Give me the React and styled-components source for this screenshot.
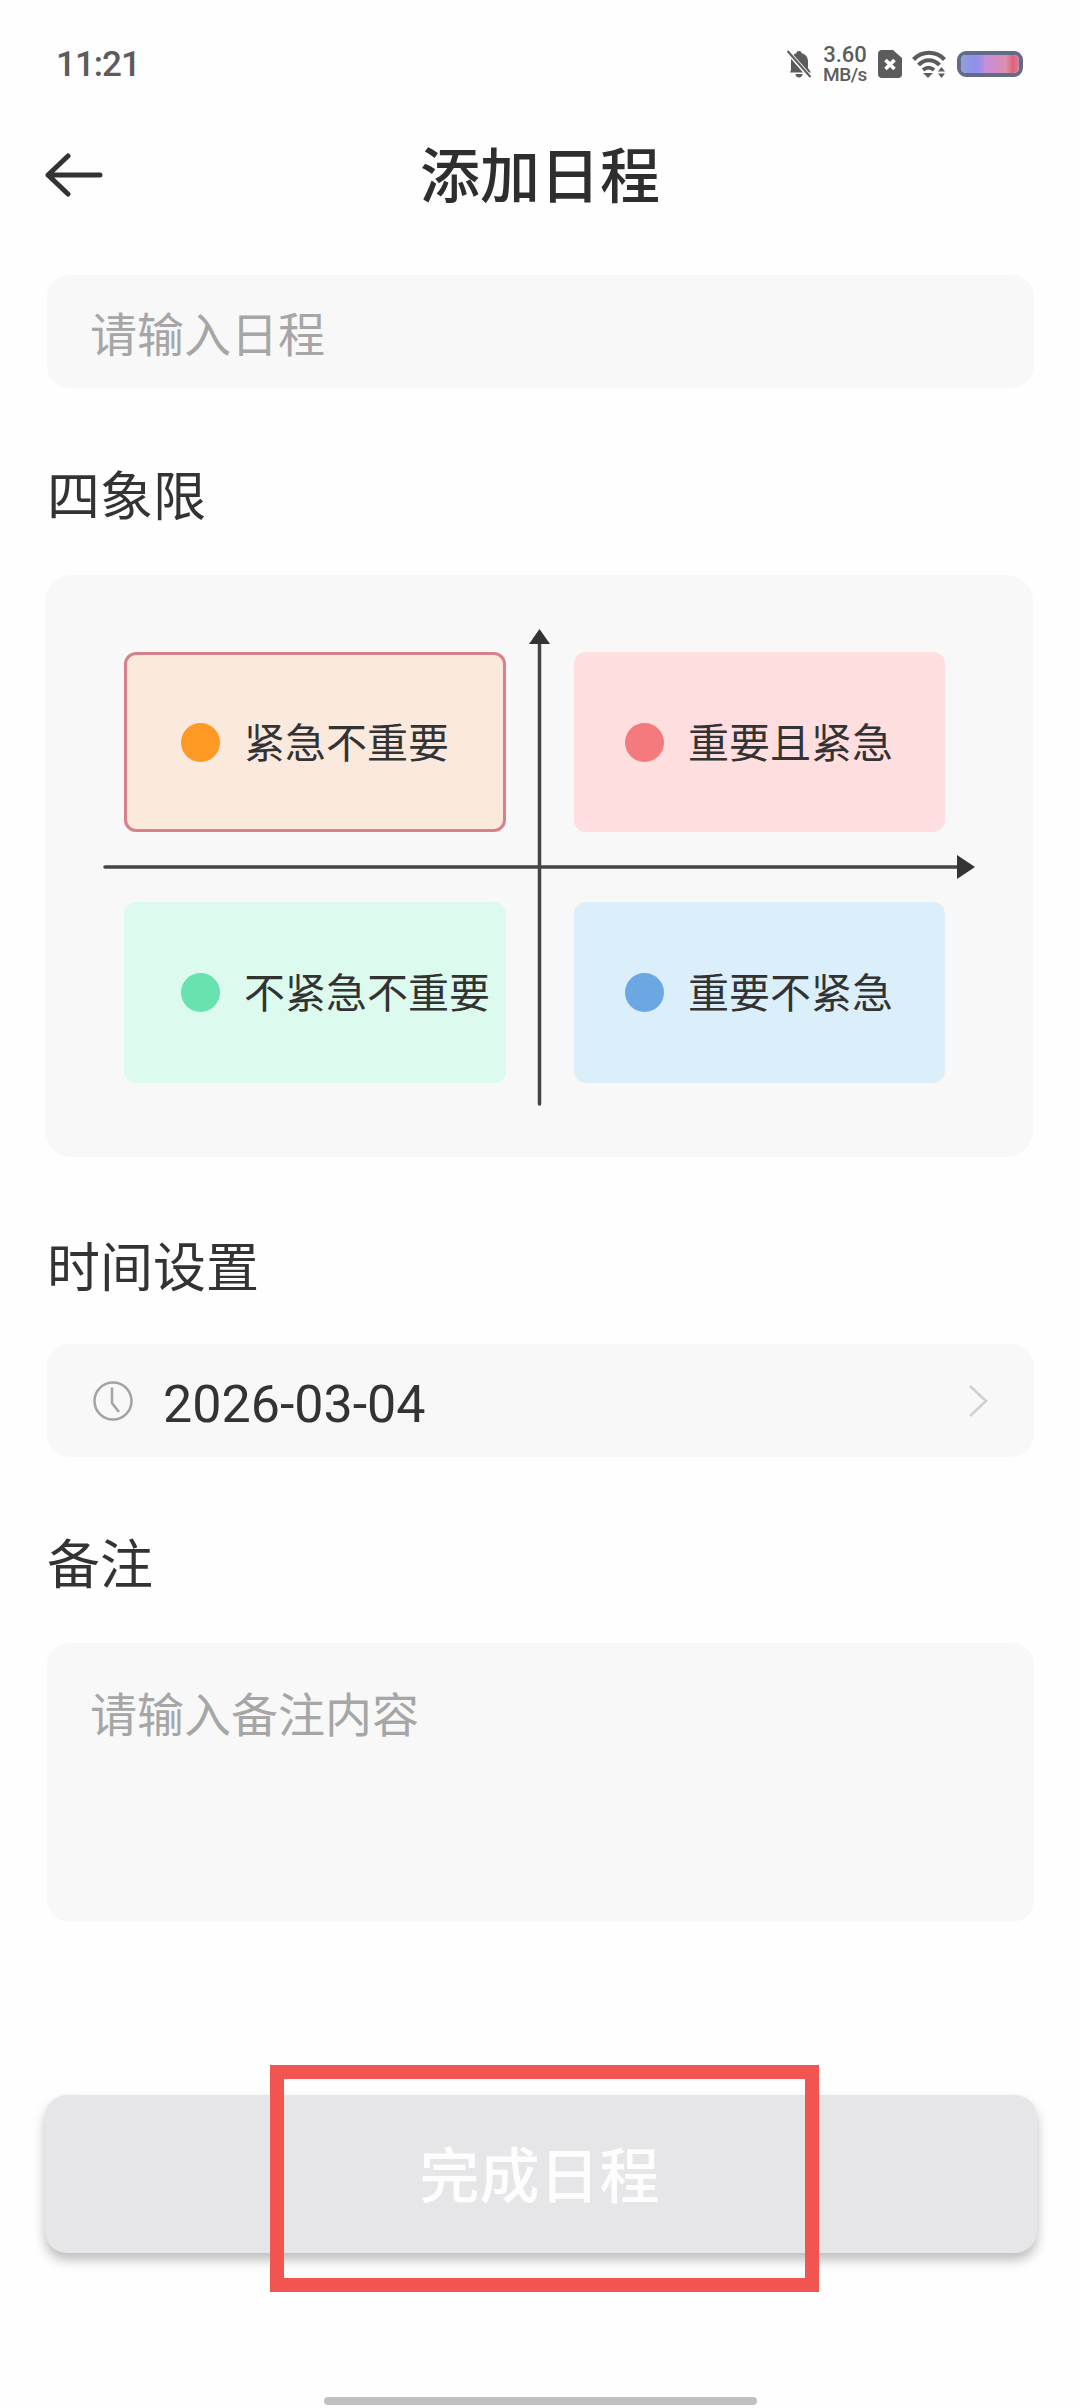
import styled, { createGlobalStyle } from "styled-components";

const GlobalStyle = createGlobalStyle`
  html, body {
    margin: 0;
    padding: 0;
    background: #fefefe;
  }
  * {
    box-sizing: border-box;
  }
`;

const cjk = `"Noto Sans CJK SC", "Noto Sans", sans-serif`;

const Page = styled.div`
  position: relative;
  width: 1080px;
  height: 2408px;
  overflow: hidden;
  background: #fefefe;
  font-family: ${cjk};
  color: #333;
`;

const StatusBar = styled.div`
  height: 128px;
  padding: 0 57px;
  display: flex;
  align-items: center;
  justify-content: space-between;
  color: #5c5c5c;
  font-family: Roboto, sans-serif;
`;

const Time = styled.span`
  margin-left: -1px;
  font-size: 35px;
  font-weight: 500;
  letter-spacing: -1px;
`;

const StatusIcons = styled.div`
  display: flex;
  align-items: center;
`;

const Speed = styled.div`
  width: 44px;
  margin: 0 11px 0 12px;
  display: flex;
  flex-direction: column;
  align-items: center;
  font-weight: 500;
  line-height: 1;
`;

const SpeedValue = styled.span`
  font-size: 22px;
  height: 21px;
`;

const SpeedUnit = styled.span`
  font-size: 19px;
  letter-spacing: -0.5px;
`;

const Battery = styled.div`
  width: 66px;
  height: 26px;
  margin-left: 11px;
  border: 4px solid #646b88;
  border-radius: 9px;
  overflow: hidden;
`;

const BatteryFill = styled.div`
  height: 100%;
  background: linear-gradient(90deg, #8fa0d8 0%, #8f90ee 25%, #a08fe6 34%, #c98fd8 42%, #d08cc6 62%, #dc90a8 78%, #e0607c 90%, #d8809c 100%);
`;

const Header = styled.div`
  height: 94px;
  margin-bottom: 53px;
  padding-left: 45px;
  display: grid;
  grid-template-columns: 1fr auto 1fr;
  align-items: center;
`;

const BackIcon = styled.svg`
  width: 58px;
  height: 44px;
  display: block;
`;

const Title = styled.h1`
  margin: 0 45px 6px 0;
  font-size: 60px;
  font-weight: 500;
  line-height: 1;
  color: #2e2e2e;
`;

const Content = styled.div`
  padding: 0 45px;
`;

const Field = styled.div`
  height: ${(p) => p.$height}px;
  padding: ${(p) => (p.$multi ? "39px 46px 0" : "0 46px")};
  margin-left: 2px;
  width: 987px;
  display: flex;
  align-items: ${(p) => (p.$multi ? "flex-start" : "center")};
  background: #f8f8f8;
  border-radius: 22px;
`;

const Placeholder = styled.span`
  margin-left: -3px;
  font-size: 47px;
  line-height: 60px;
  color: #a6a6a6;
`;

const SectionLabel = styled.div`
  height: 60px;
  margin: ${(p) => p.$top}px 0 ${(p) => p.$bottom}px 2px;
  font-size: 53px;
  line-height: 56px;
  color: #333;
`;

const MatrixPanel = styled.div`
  position: relative;
  height: 582px;
  width: 988px;
  padding: 77px 0 0 79px;
  background: #f8f8f8;
  border-radius: 26px;
`;

const MatrixGrid = styled.div`
  display: grid;
  grid-template-columns: 382px 371px;
  grid-template-rows: 180px 181px;
  column-gap: 68px;
  row-gap: 70px;
`;

const Quadrant = styled.div`
  display: flex;
  align-items: center;
  gap: 24px;
  padding-left: ${(p) => p.$inset}px;
  background: ${(p) => p.$bg};
  border: ${(p) => (p.$selected ? "3px solid #d8818a" : "none")};
  border-radius: 12px;
  font-size: 41px;
  line-height: 50px;
  color: #333;
  white-space: nowrap;
`;

const QuadrantLabel = styled.span`
  margin-bottom: 5px;
`;

const Dot = styled.span`
  width: 39px;
  height: 39px;
  flex: none;
  border-radius: 50%;
  background: ${(p) => p.$color};
`;

const Axes = styled.svg`
  position: absolute;
  left: 0;
  top: 0;
  width: 990px;
  height: 582px;
  pointer-events: none;
`;

const DateValue = styled.span`
  margin: 8px 0 0 30px;
  font-family: Roboto, sans-serif;
  font-size: 52px;
  line-height: 60px;
  color: #333;
  flex: 1;
`;

const IconSvg = styled.svg`
  display: block;
  flex: none;
`;

const DoneButton = styled.button`
  display: block;
  width: 992px;
  height: 158px;
  margin-top: 173px;
  padding: 0 3px 6px 0;
  border: none;
  border-radius: 22px;
  background: #e6e6e8;
  box-shadow: 0 7px 12px rgba(0, 0, 0, 0.26);
  font-family: ${cjk};
  font-size: 60px;
  font-weight: 500;
  color: #fdfdfd;
`;

const HomeIndicator = styled.div`
  width: 433px;
  height: 8px;
  margin: 144px 0 0 324px;
  background: #c0c0c0;
  border-radius: 4px;
`;

const Annotation = styled.div`
  position: absolute;
  left: 270px;
  top: 2065px;
  width: 549px;
  height: 227px;
  border: 14px solid #f25450;
  pointer-events: none;
`;

const quadrants = [
  { label: "紧急不重要", bg: "#fce9de", dot: "#fe9a23", inset: 54, selected: true },
  { label: "重要且紧急", bg: "#ffdedf", dot: "#f37a7d", inset: 51 },
  { label: "不紧急不重要", bg: "#dcfbee", dot: "#68e2ae", inset: 57 },
  { label: "重要不紧急", bg: "#dbeffb", dot: "#6ba7e2", inset: 51 },
];

const App = () => {
  return (
    <Page>
      <GlobalStyle />
      <StatusBar>
        <Time>11:21</Time>
        <StatusIcons>
          <IconSvg width="24" height="28" viewBox="0 0 24 28">
            <path
              d="M12 1c1.500 0 2.500.9 2.700 2.200C19 4.200 21 7.500 21 11.500v6.500l3 4.500H3L4 20V11.500C4 7.500 5.500 4.200 9.300 3.200 9.500 1.900 10.500 1 12 1zM8.500 24h7c0 2-1.500 3.500-3.500 3.500S8.500 26 8.500 24z"
              fill="#5c5c5c"
            />
            <path d="M1 2l22 25" stroke="#fefefe" strokeWidth="4.500" />
            <path d="M0.500 1l23 26" stroke="#5c5c5c" strokeWidth="2.200" />
          </IconSvg>
          <Speed>
            <SpeedValue>3.60</SpeedValue>
            <SpeedUnit>MB/s</SpeedUnit>
          </Speed>
          <IconSvg width="24" height="28" viewBox="0 0 24 28">
            <path
              d="M4 0h11l9 8v16a4 4 0 0 1-4 4H4a4 4 0 0 1-4-4V4a4 4 0 0 1 4-4z"
              fill="#5c5c5c"
            />
            <path d="M7.500 10l9 9M16.500 10l-9 9" stroke="#fff" strokeWidth="3.600" />
          </IconSvg>
          <IconSvg width="34" height="28" viewBox="0 0 34 28" style={{ marginLeft: 10 }}>
            <path d="M1.500 9.500C10 .5 24 .5 32.500 9.500" fill="none" stroke="#5c5c5c" strokeWidth="4.200" />
            <path d="M6.500 15C12.500 8.500 21.500 8.500 27.500 15" fill="none" stroke="#5c5c5c" strokeWidth="4" />
            <path d="M11 20c3.500-3 7.500-3 11 0" fill="none" stroke="#5c5c5c" strokeWidth="3.800" />
            <path d="M11 23h10l-5 5z" fill="#5c5c5c" />
            <path d="M26 21.500h7L29.500 17zM26 23.500h7L29.500 28z" fill="#5c5c5c" />
          </IconSvg>
          <Battery>
            <BatteryFill />
          </Battery>
        </StatusIcons>
      </StatusBar>

      <Header>
        <BackIcon viewBox="0 0 58 44">
          <path
            d="M23 3L3 22l20 19M3 22h52"
            fill="none"
            stroke="#333"
            strokeWidth="5"
            strokeLinecap="round"
            strokeLinejoin="round"
          />
        </BackIcon>
        <Title>添加日程</Title>
      </Header>

      <Content>
        <Field $height={113}>
          <Placeholder>请输入日程</Placeholder>
        </Field>

        <SectionLabel $top={77} $bottom={50}>四象限</SectionLabel>
        <MatrixPanel>
          <MatrixGrid>
            {quadrants.map((q) => (
              <Quadrant key={q.label} $bg={q.bg} $inset={q.inset} $selected={q.selected}>
                <Dot $color={q.dot} />
                <QuadrantLabel>{q.label}</QuadrantLabel>
              </Quadrant>
            ))}
          </MatrixGrid>
          <Axes viewBox="0 0 990 582">
            <path d="M494.500 66V529M60 292H915" stroke="#444" strokeWidth="3.500" strokeLinecap="round" fill="none" />
            <path d="M494.500 54L505 69H484z" fill="#333" />
            <path d="M930 292L912 280V304z" fill="#333" />
          </Axes>
        </MatrixPanel>

        <SectionLabel $top={79} $bottom={48}>时间设置</SectionLabel>
        <Field $height={113}>
          <IconSvg width="40" height="42" viewBox="0 0 40 42">
            <circle cx="20" cy="21" r="18.500" fill="none" stroke="#a3a3a3" strokeWidth="2.500" />
            <path d="M19 7.500V23l7 9" fill="none" stroke="#a3a3a3" strokeWidth="2.500" />
          </IconSvg>
          <DateValue>2026-03-04</DateValue>
          <IconSvg width="20" height="32" viewBox="0 0 20 32">
            <path d="M2 1l16 15L2 31" fill="none" stroke="#d0d0d0" strokeWidth="2.500" />
          </IconSvg>
        </Field>

        <SectionLabel $top={76} $bottom={50}>备注</SectionLabel>
        <Field $height={279} $multi>
          <Placeholder>请输入备注内容</Placeholder>
        </Field>

        <DoneButton>完成日程</DoneButton>
      </Content>

      <HomeIndicator />
      <Annotation />
    </Page>
  );
};

export default App;
